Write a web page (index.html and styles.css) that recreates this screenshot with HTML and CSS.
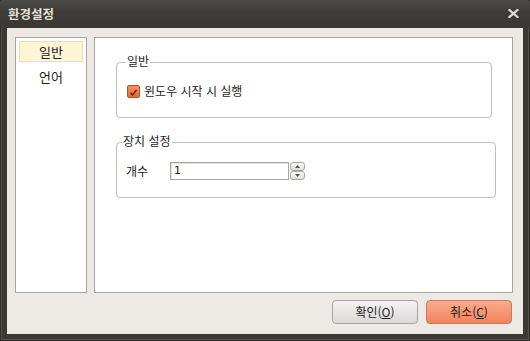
FILE: index.html
```html
<!DOCTYPE html>
<html lang="ko">
<head>
<meta charset="utf-8">
<title>환경설정</title>
<link rel="stylesheet" href="styles.css">
</head>
<body>
<div class="window">
  <div class="titlebar">
    <span class="title">환경설정</span>
    <span class="close" aria-label="닫기">
      <svg width="11" height="9" viewBox="0 0 11 9"><path d="M1.5 1 L9.5 8 M9.5 1 L1.5 8" stroke="#dcdcda" stroke-width="2.2" stroke-linecap="square"/></svg>
    </span>
  </div>
  <div class="client">
    <div class="panes">
      <ul class="nav">
        <li class="item selected">일반</li>
        <li class="item">언어</li>
      </ul>
      <div class="content">
        <fieldset class="group g1">
          <legend>일반</legend>
          <label class="check">
            <span class="box">
              <svg width="13" height="13" viewBox="0 0 13 13"><path d="M3 6.8 L5.4 9.4 L10 3.6" fill="none" stroke="#5b2a12" stroke-width="1.8"/></svg>
            </span>
            <span>윈도우 시작 시 실행</span>
          </label>
        </fieldset>
        <fieldset class="group g2">
          <legend>장치 설정</legend>
          <div class="field">
            <span class="label">개수</span>
            <span class="input">1</span>
            <span class="spin">
              <span class="spin-btn"><svg width="5" height="3" viewBox="0 0 5 3"><path d="M0 3 L2.5 0 L5 3 Z" fill="#555"/></svg></span>
              <span class="spin-btn"><svg width="5" height="3" viewBox="0 0 5 3"><path d="M0 0 L2.5 3 L5 0 Z" fill="#555"/></svg></span>
            </span>
          </div>
        </fieldset>
      </div>
    </div>
    <div class="buttons">
      <span class="btn">확인(<u>O</u>)</span>
      <span class="btn cancel">취소(<u>C</u>)</span>
    </div>
  </div>
</div>
</body>
</html>
```
FILE: styles.css
```css
html, body {
  margin: 0;
  padding: 0;
  background: #3c3b37;
}
body {
  font-family: "Noto Sans CJK KR", "Noto Sans", sans-serif;
  font-size: 12px;
  color: #1e1e1e;
}
.window {
  width: 530px;
  height: 341px;
  box-sizing: border-box;
  display: flex;
  flex-direction: column;
  background: #3a3935;
  box-shadow: inset 0 0 0 1px #2c2b28, inset 0 0 0 2px #55544f;
}
.titlebar {
  height: 28px;
  flex: none;
  display: flex;
  align-items: center;
  justify-content: space-between;
  padding: 0 11px 0 8px;
  background: linear-gradient(#4d4c48, #3d3c38 40%, #393834);
  border-radius: 3px 3px 0 0;
}
.title {
  font-weight: bold;
  font-size: 12.5px;
  line-height: 16px;
  color: #e4e1dc;
  margin-top: 0;
}
.close {
  display: flex;
  margin-top: -1px;
}
.client {
  flex: 1;
  margin: 0 7px 7px 7px;
  background: #edeae6;
  padding: 9px 10px 10px 8px;
  display: flex;
  flex-direction: column;
}
.panes {
  flex: 1;
  display: flex;
  gap: 7px;
}
.nav {
  list-style: none;
  margin: 0;
  width: 72px;
  box-sizing: border-box;
  padding: 3px;
  background: #fff;
  border: 1px solid #a9a6a2;
  display: flex;
  flex-direction: column;
  gap: 4px;
}
.item {
  height: 21px;
  box-sizing: border-box;
  display: flex;
  align-items: center;
  justify-content: center;
  font-size: 13px;
  line-height: 15px;
  border: 1px solid transparent;
}
.item.selected {
  background: #fff4d6;
  border-color: #f3dda5;
}
.content {
  flex: 1;
  background: #fff;
  border: 1px solid #a9a6a2;
  padding: 16px 0 0 21px;
}
.group {
  margin: 0;
  border: 1px solid #c3bfbb;
  border-radius: 4px;
  min-inline-size: 0;
}
.group legend {
  font-size: 12px;
  line-height: 14px;
  padding: 0 1px 3px 1px;
}
.g1 {
  width: 376px;
  box-sizing: border-box;
  padding: 13px 0 19px 10px;
}
.g1 legend {
  margin-left: -1px;
}
.g2 {
  width: 380px;
  box-sizing: border-box;
  margin-top: 16px;
  padding: 11px 0 17px 9px;
}
.g2 legend {
  margin-left: -4px;
}
.check {
  display: flex;
  align-items: center;
  gap: 4px;
  height: 14px;
  line-height: 14px;
}
.box {
  width: 13px;
  height: 13px;
  box-sizing: border-box;
  border: 1px solid #b1542a;
  border-radius: 2px;
  background: linear-gradient(#f79162, #e86a35);
  display: flex;
}
.field {
  display: flex;
  align-items: center;
  height: 18px;
}
.label {
  width: 44px;
  line-height: 14px;
}
.input {
  width: 119px;
  height: 18px;
  box-sizing: border-box;
  border: 1px solid #a7a5a2;
  box-shadow: inset 1px 1px 0 #e4e2de;
  background: #fff;
  font-family: "DejaVu Sans", sans-serif;
  font-size: 11px;
  line-height: 16px;
  padding-left: 3px;
}
.spin {
  display: flex;
  flex-direction: column;
  margin-left: 1px;
  gap: 0;
}
.spin-btn {
  width: 15px;
  height: 9px;
  box-sizing: border-box;
  border: 1px solid #a9a7a4;
  border-radius: 3px;
  background: linear-gradient(#fbfbfa, #dedcd9);
  display: flex;
  align-items: center;
  justify-content: center;
}
.buttons {
  flex: none;
  margin-top: 7px;
  margin-right: 1px;
  display: flex;
  justify-content: flex-end;
  gap: 8px;
}
.btn {
  width: 86px;
  height: 24px;
  box-sizing: border-box;
  border: 1px solid #a6a4a1;
  border-radius: 4px;
  background: linear-gradient(#f4f3f2, #dcdad7);
  display: flex;
  align-items: center;
  justify-content: center;
  font-size: 12px;
  line-height: 14px;
  color: #202020;
}
.btn u {
  text-underline-offset: 1px;
}
.btn.cancel {
  border-color: #c47b5f;
  background: linear-gradient(#fbab8d, #ef845d);
}
```
